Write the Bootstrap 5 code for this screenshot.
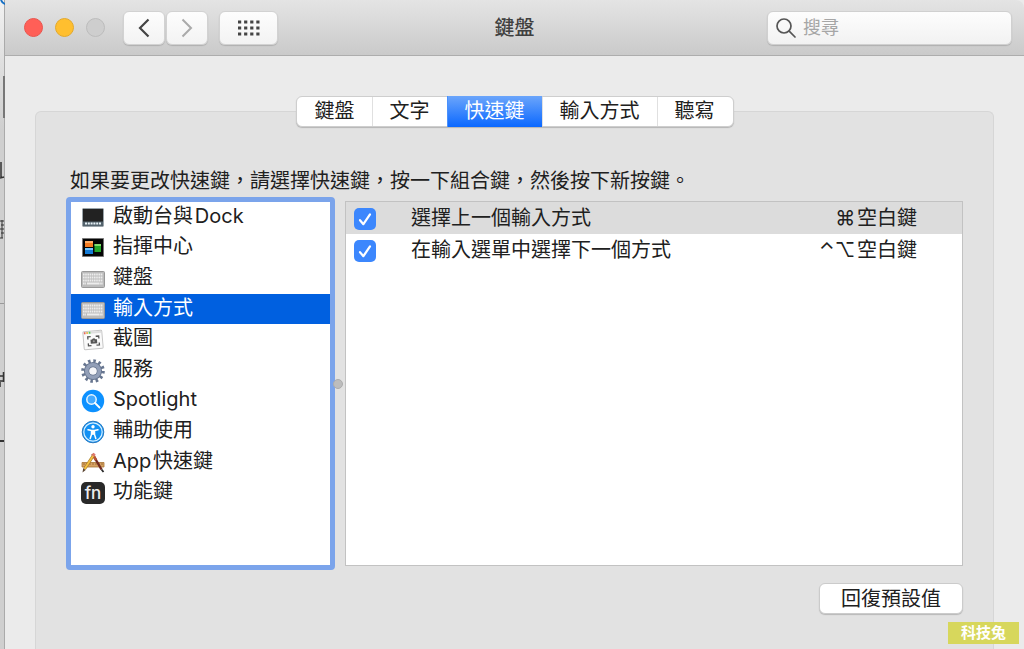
<!DOCTYPE html>
<html lang="zh-Hant-TW">
<head>
<meta charset="utf-8">
<meta name="viewport" content="width=device-width, initial-scale=1">
<title>鍵盤</title>
<link href="https://cdn.jsdelivr.net/npm/bootstrap@5.3.0/dist/css/bootstrap.min.css" rel="stylesheet">
<style>
  body { font-family: Inter, "Noto Sans CJK TC", sans-serif; font-size: 20px; line-height: 30px; color: #202020; background: #cfcfcf; }
  .backdrop { width: 5px; border-right: 1px solid #aaa; background: linear-gradient(#f2f2f2, #e0e0e0 60px, #cfcfcf 130px); }
  .prefs { background: #ebebeb; min-width: 0; }
  .titlebar { height: 56px; padding: 0 12px; background: linear-gradient(#e4e4e4, #cacaca); border-bottom: 1px solid #adadad; border-top-right-radius: 8px; display: grid; grid-template-columns: 1fr auto 1fr; align-items: center; }
  .lights { gap: 12px; margin: 0 18px 0 7px; }
  .light { width: 19px; height: 19px; padding: 0; border-radius: 50%; border: 1px solid #bcbcbc; background: #cecece; }
  .light-red { background: #ff5f57; border-color: #e9554e; }
  .light-yellow { background: #ffbf2f; border-color: #e3a92c; }
  .tools { gap: 1px; }
  .tool { width: 42px; height: 34px; padding: 0; border: 1px solid #d2d2d2; border-radius: 6px; background: linear-gradient(#fdfdfd, #f3f3f3); box-shadow: 0 1px 1px #b0b0b0; display: flex; align-items: center; justify-content: center; }
  .tool-grid { width: 59px; margin-left: 10px; }
  .window-title { color: #404040; font-size: 20px; line-height: 30px; margin: 0; font-weight: 500; }
  .search { width: 245px; height: 34px; border: 1px solid #d0d0d0; border-radius: 6px; background: linear-gradient(#fdfdfd, #f2f2f2); box-shadow: 0 1px 1px #b0b0b0; padding: 0 8px; gap: 7px; }
  .search input { border: 0; outline: 0; background: none; padding: 0; width: 100%; min-width: 0; font-size: 18px; height: 30px; }
  .search input::placeholder { color: #a6a6a6; opacity: 1; }
  .pane { margin: 55px 30px 0; padding: 0 30px; background: #e2e2e2; border: 1px solid #d6d6d6; border-bottom: 0; border-radius: 6px 6px 0 0; }
  .segments { margin-top: -16px; height: 31px; background: #fff; border-radius: 6px; border: 1px solid #cecece; box-shadow: 0 1px 1px #b5b5b5; }
  .segments button { border: 0; border-left: 1px solid #e0e0e0; background: none; color: inherit; padding: 0 17px; line-height: 29px; }
  .segments button:first-child { border-left: 0; padding-left: 18px; }
  .segments button:last-child { padding-right: 18px; }
  .segments button.active { background: linear-gradient(#6ba5fb, #0b68ff); color: #fff; margin: -1px 0; border-color: #4a91fc; }
  .hint { margin: 38px 0 0 4px; line-height: 32px; }
  .sidebar { width: 269px; min-height: 373px; border: 5px solid #7ba4eb; border-radius: 4px; background: #fff; }
  .sidebar ul { height: 306px; margin: 0; padding: 0; list-style: none; display: flex; flex-direction: column; }
  .sidebar li { flex: 1 1 0; min-height: 0; }
  .sidebar a { height: 100%; padding: 0 0 2px 9px; gap: 7px; color: inherit; text-decoration: none; line-height: 29px; }
  .sidebar a svg { margin-top: 3px; flex: none; }
  .sidebar a.active { background: #0060e0; color: #fff; }
  .splitter { width: 10px; position: relative; }
  .splitter span { position: absolute; left: -2px; top: 50%; width: 10px; height: 10px; border-radius: 50%; background: #bdbdbd; border: 1px solid #adadad; margin-top: -5px; }
  .shortcuts { margin: 4px 0; background: #fff; border: 1px solid #c2c2c2; min-width: 0; }
  .shortcuts table { width: 100%; border-collapse: collapse; }
  .shortcuts td { height: 32px; padding: 0; line-height: 31px; vertical-align: middle; }
  .shortcuts td:first-child { width: 65px; padding-left: 8px; }
  .shortcuts td:last-child { text-align: right; padding-right: 45px; }
  .shortcuts tr.current { background: #dcdcdc; }
  .shortcuts input { display: block; width: 22px; height: 22px; margin: 2px 0 0; border: 0; border-radius: 4px; background-color: #3c87fd; }
  .shortcuts .form-check-input:checked { background-color: #3c87fd; background-size: 22px 22px; background-image: url("data:image/svg+xml,%3Csvg xmlns='http://www.w3.org/2000/svg' viewBox='0 0 22 22'%3E%3Cpath d='M6 12.2l3.4 4L16 6.4' fill='none' stroke='%23fff' stroke-width='2.2' stroke-linecap='round' stroke-linejoin='round'/%3E%3C/svg%3E"); }
  .restore { width: 144px; height: 31px; margin: 13px 0 34px; padding: 0; border: 1px solid #cbcbcb; border-radius: 6px; background: #fff; color: inherit; box-shadow: 0 1px 1px #b8b8b8; line-height: 28px; }
  .watermark { right: 5px; bottom: 5px; padding: 0 13px; background: #d7d75c; color: #fff; font-size: 15px; line-height: 22px; font-weight: 700; }
</style>
</head>
<body class="d-flex min-vh-100">
<div class="backdrop flex-shrink-0" aria-hidden="true">
  <svg class="d-block" width="5" height="460" fill="none" stroke="#333">
    <path d="M1 0q1 3 4 4" stroke="#1670c5" stroke-width="2"/>
    <path d="M4 76v42" stroke="#777" stroke-width="2"/>
    <path d="M1 162v15M0 178l4-1" stroke-width="1.500"/>
    <path d="M0 221h4M1 225h3M0 229h4M1 233h3M0 238h3M2 220v18" stroke-width="1"/>
    <path d="M0 303.500h4" stroke="#999"/>
    <path d="M0 376h4M0 381h4M3.500 372v10M0 382v5" stroke-width="1.500"/>
    <path d="M0 441h4" stroke-width="2"/>
  </svg>
</div>
<main class="prefs flex-grow-1 d-flex flex-column">
  <header class="titlebar">
    <div class="d-flex align-items-center">
      <div class="lights d-flex">
        <button class="light light-red" aria-label="關閉"></button>
        <button class="light light-yellow" aria-label="縮到最小"></button>
        <button class="light" aria-label="縮放" disabled></button>
      </div>
      <div class="tools d-flex">
        <button class="tool" aria-label="返回"><svg width="12" height="20" fill="none" stroke="#444" stroke-width="2.200"><path d="M10.500 1.500L2 10l8.500 8.500"/></svg></button>
        <button class="tool" aria-label="前進"><svg width="12" height="20" fill="none" stroke="#aaa" stroke-width="2"><path d="M1.500 1.500L10 10l-8.500 8.500"/></svg></button>
        <button class="tool tool-grid" aria-label="顯示全部"><svg width="22" height="16" stroke="#444" stroke-width="3.200" stroke-dasharray="3.200 2.900"><path d="M0 2h22M0 8h22M0 14h22"/></svg></button>
      </div>
    </div>
    <h1 class="window-title">鍵盤</h1>
    <label class="search d-flex align-items-center ms-auto">
      <svg class="flex-shrink-0" width="20" height="20" fill="none" stroke="#555" stroke-width="1.700" stroke-linecap="round"><circle cx="8" cy="8" r="7"/><path d="M13.200 13.200L19 19"/></svg>
      <input type="search" placeholder="搜尋" aria-label="搜尋">
    </label>
  </header>

  <section class="pane flex-grow-1 d-flex flex-column">
    <nav class="segments d-flex align-self-center">
      <button>鍵盤</button><button>文字</button><button class="active">快速鍵</button><button>輸入方式</button><button>聽寫</button>
    </nav>
    <p class="hint">如果要更改快速鍵，請選擇快速鍵，按一下組合鍵，然後按下新按鍵。</p>
    <div class="d-flex">
      <div class="sidebar flex-shrink-0">
        <ul>
          <li><a href="#" class="d-flex align-items-center"><svg width="26" height="22"><rect x="2.500" y="1.500" width="21" height="18" rx="1" fill="#222" stroke="#9aa4aa"/><path d="M3 14.500h20v4.500H3z" fill="#53626c"/><path d="M5 16.500h16" stroke="#e7f1f6" stroke-width="2" stroke-dasharray="2 .8"/></svg>啟動台與&#8202;Dock</a></li>
          <li><a href="#" class="d-flex align-items-center"><svg width="26" height="22"><path d="M2.500 1.500h21v18h-21z" fill="#050505" stroke="#777"/><path d="M5 4h8v6H5z" fill="#f47b20"/><path d="M5 4h8v2H5z" fill="#ffad64"/><path d="M14.500 7H21v8h-6.500z" fill="#25a929"/><path d="M14.500 7H21v2h-6.500z" fill="#83df6f"/><path d="M5 11h8v6H5z" fill="#147bd6"/><path d="M5 11h8v2H5z" fill="#74c7ff"/></svg>指揮中心</a></li>
          <li><a href="#" class="d-flex align-items-center"><svg width="26" height="22"><use href="#keyboard"/></svg>鍵盤</a></li>
          <li><a href="#" class="active d-flex align-items-center" aria-current="true"><svg width="26" height="22"><g id="keyboard"><rect x="1.500" y="3.500" width="23" height="16" rx="1" fill="#bcbcbc" stroke="#999"/><path d="M3 6.500h20M3 9.500h20M3 12.500h20M3 15.500h3m12 0h5" stroke="#ededed" stroke-width="2" stroke-dasharray="1.600 .6"/><path d="M7 15.500h11" stroke="#ededed" stroke-width="2"/></g></svg>輸入方式</a></li>
          <li><a href="#" class="d-flex align-items-center"><svg width="26" height="22"><g transform="rotate(-5 13 11)"><rect x="3.500" y="2" width="19" height="18" rx="1" fill="#fafafa" stroke="#c6c6c6"/><path d="M4 2.500h18v2H4z" fill="#dedede"/><path d="M4.500 3.500h1.500" stroke="#e65" stroke-width="2"/><path d="M7 3.500h1.500" stroke="#eb4" stroke-width="2"/><path d="M9.500 3.500h1.500" stroke="#5c5" stroke-width="2"/><path d="M8 10V7.500h3m5 0h3V10m0 4v2.500h-3m-5 0H8V14" fill="none" stroke="#555" stroke-width="1.300"/><path d="M10.500 10.500h1.500l1-1h1.500l1 1h1.500v4h-6.500z" fill="#555"/><circle cx="13.700" cy="12.300" r="1" fill="#999"/></g></svg>截圖</a></li>
          <li><a href="#" class="d-flex align-items-center"><svg width="26" height="24" viewBox="0 0 26 24"><circle cx="13" cy="12" r="10" fill="none" stroke="#66758f" stroke-width="3.600" stroke-dasharray="2.490 2.746"/><circle cx="13" cy="12" r="6.300" fill="none" stroke="#66758f" stroke-width="5.600"/><circle cx="13" cy="12" r="6.300" fill="none" stroke="#929fb8" stroke-width="3.600"/><circle cx="13" cy="12" r="3.600" fill="#f5f6f9"/></svg>服務</a></li>
          <li><a href="#" class="d-flex align-items-center"><svg width="26" height="24"><circle cx="13" cy="12" r="11.200" fill="#0d91ff"/><circle cx="11.500" cy="10.500" r="4.700" fill="#45aaff" stroke="#e8f6ff" stroke-width="1.500"/><path d="M15 14l4.500 4.500" stroke="#fff" stroke-width="1.800" stroke-linecap="round"/></svg>Spotlight</a></li>
          <li><a href="#" class="d-flex align-items-center"><svg width="26" height="24"><circle cx="13" cy="12" r="10.800" fill="#1291f4" stroke="#2879bf"/><circle cx="13" cy="12" r="9.200" fill="none" stroke="#d9f1ff" stroke-width="1.200"/><circle cx="13" cy="6.800" r="1.700" fill="#fff"/><path d="M8 9.800l3.500.8h3l3.500-.8M11.500 10.500v4l-1.300 4M14.500 10.500v4l1.300 4" fill="none" stroke="#fff" stroke-width="1.500" stroke-linecap="round"/><path d="M11.300 10.300h3.400v4.500h-3.400z" fill="#fff"/></svg>輔助使用</a></li>
          <li><a href="#" class="d-flex align-items-center"><svg width="26" height="22"><path d="M2 10.500h22v4.500H2z" fill="#d6a263" stroke="#a77336" stroke-width=".8"/><path d="M4 11v2m3-2v2m3-2v2m3-2v2m3-2v2m3-2v2m3-2v2" stroke="#8b5d29" stroke-width=".7"/><path d="M12.500 2l9 15.500" stroke="#712a20" stroke-width="2.400"/><path d="M12.500 2l3.500 6" stroke="#b85439" stroke-width="2.600"/><path d="M21.500 17.500l2 2.500" stroke="#292929" stroke-width="1.800"/><path d="M14 2.500L4.500 17" stroke="#9a7223" stroke-width="3"/><path d="M14 2.500L4.500 17" stroke="#f3bf42" stroke-width="2"/><path d="M14.500 1.500l-1.500 2.500" stroke="#df776f" stroke-width="2.600"/><path d="M2.500 20.500l.7-4.200 2.500 1.800z" fill="#5b4431"/></svg>App&#8202;快速鍵</a></li>
          <li><a href="#" class="d-flex align-items-center"><svg width="26" height="22"><rect x="1" y="0" width="24" height="22" rx="5" fill="#292929"/><text x="13" y="16.500" text-anchor="middle" font-size="17" font-weight="500" fill="#eee">fn</text></svg>功能鍵</a></li>
        </ul>
      </div>
      <div class="splitter flex-shrink-0"><span></span></div>
      <div class="shortcuts flex-grow-1">
        <table>
          <tbody>
          <tr class="current"><td><input class="form-check-input" type="checkbox" id="prev" checked></td><td><label for="prev">選擇上一個輸入方式</label></td><td>⌘&#8202;空白鍵</td></tr>
          <tr><td><input class="form-check-input" type="checkbox" id="next" checked></td><td><label for="next">在輸入選單中選擇下一個方式</label></td><td>⌃⌥&#8202;空白鍵</td></tr>
          </tbody>
        </table>
      </div>
    </div>
    <button class="restore align-self-end">回復預設值</button>
  </section>
</main>
<div class="watermark position-fixed">科技兔</div>
<script src="https://cdn.jsdelivr.net/npm/bootstrap@5.3.0/dist/js/bootstrap.bundle.min.js"></script>
</body>
</html>
